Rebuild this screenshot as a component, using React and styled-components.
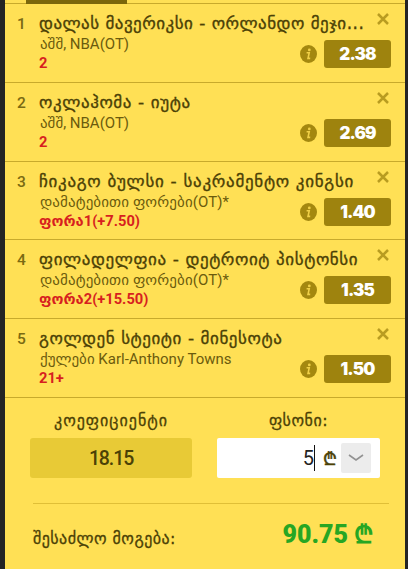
import React from "react";
import styled, { createGlobalStyle } from "styled-components";

const Global = createGlobalStyle`
  * { box-sizing: border-box; }
  body { margin: 0; background: #242424; }
`;
const Slip = styled.main`
  width: 400px;
  height: 569px;
  margin-left: 5px;
  overflow: hidden;
  background: #ffe055;
  color: #4b4106;
  font-family: Roboto, "DejaVu Sans", sans-serif;
`;
const TabBar = styled.div`
  height: 4px;
  padding-left: 21px;
  border-bottom: 1px solid #c8aa2c;
`;
const ActiveTab = styled.div`
  width: 101px;
  height: 4px;
  background: #7b670b;
`;
const BetRow = styled.article`
  display: grid;
  grid-template-columns: 34px 1fr 91px;
  height: ${(p) => p.$height}px;
  padding: 0 14px 0 0;
  border-bottom: 1px solid #c8aa2c;
`;
const Index = styled.div`
  padding: 10px 0 0 12px;
  font: 500 15.5px/20px Roboto, sans-serif;
  color: #7a6a12;
`;
const Details = styled.div`
  min-width: 0;
  padding-top: 8px;
  white-space: nowrap;
`;
const Title = styled.div`
  height: 22px;
  font: 400 17px/22px "DejaVu Sans", sans-serif;
  letter-spacing: ${(p) => p.$spacing}px;
  -webkit-text-stroke: 0.35px currentColor;
`;
const Market = styled.div`
  height: 20px;
  padding: 1px 0 0 1px;
  font: 400 15px/19px Roboto, "DejaVu Sans", sans-serif;
  letter-spacing: ${(p) => p.$spacing}px;
  color: #6b5b0d;
`;
const Pick = styled.div`
  height: 18px;
  font: 700 14.7px/18px Roboto, "DejaVu Sans", sans-serif;
  color: #d71f1f;
`;
const Side = styled.div`
  display: flex;
  flex-direction: column;
  align-items: flex-end;
  padding-top: 9px;
`;
const CloseIcon = styled.svg`
  width: 12px;
  height: 12px;
  margin-right: 2px;
  flex: none;
  stroke: #b99c21;
  stroke-width: 2.5;
`;
const OddsLine = styled.div`
  display: flex;
  align-items: center;
  gap: 7px;
  margin-top: 15px;
`;
const InfoIcon = styled.svg`
  width: 17px;
  height: 18px;
  flex: none;
`;
const Odds = styled.div`
  width: 67px;
  height: 28px;
  border-radius: 3px;
  background: #9e830e;
  color: #fff;
  text-align: center;
  font: 900 17px/28px Inter, sans-serif;
  letter-spacing: -0.9px;
`;
const Fields = styled.section`
  display: grid;
  grid-template-columns: 162px 163px;
  gap: 0 25px;
  padding: 12px 25px 0;
`;
const Label = styled.div`
  height: 28px;
  text-align: center;
  font: 400 16px/22px "DejaVu Sans", sans-serif;
  letter-spacing: ${(p) => p.$spacing}px;
  white-space: nowrap;
  -webkit-text-stroke: 0.3px currentColor;
`;
const Coefficient = styled.div`
  height: 40px;
  border-radius: 3px;
  background: #e8ca36;
  text-align: center;
  font: 500 19.5px/41px Roboto, sans-serif;
  letter-spacing: -1.1px;
`;
const Stake = styled.div`
  display: flex;
  align-items: center;
  justify-content: flex-end;
  height: 40px;
  padding-right: 9px;
  border-radius: 2px;
  background: #fff;
`;
const Amount = styled.span`
  height: 26px;
  border-right: 1px solid #111;
  color: #222;
  font: 400 20px/26px Roboto, sans-serif;
`;
const Currency = styled.span`
  width: 13px;
  margin: 2px 5px 0 8px;
  font: 400 18px/20px "DejaVu Sans", sans-serif;
  -webkit-text-stroke: 0.5px currentColor;
`;
const Dropdown = styled.button`
  display: grid;
  place-items: center;
  width: 30px;
  height: 30px;
  padding: 0;
  border: 0;
  border-radius: 2px;
  background: #ececec;
`;
const Winnings = styled.section`
  display: flex;
  justify-content: space-between;
  height: 66px;
  margin: 25px 16px 0 28px;
  padding: 16px 18px 0 0;
  border-top: 1px solid #e0bf37;
`;
const WinLabel = styled.div`
  padding-top: 8px;
  font: 400 16px/22px "DejaVu Sans", sans-serif;
  letter-spacing: 0.45px;
  -webkit-text-stroke: 0.3px currentColor;
`;
const WinAmount = styled.div`
  display: flex;
  gap: 6px;
  color: #27a623;
  font: 900 25px/30px Roboto, sans-serif;
`;
const WinCurrency = styled.span`
  width: 17px;
  font: 700 25px/30px "DejaVu Sans Condensed", "DejaVu Sans", sans-serif;
`;

const bets = [
  { title: "დალას მავერიკსი - ორლანდო მეჯი...", market: "აშშ, NBA(OT)", pick: "2", odds: "2.38", height: 79, spacing: 0.48 },
  { title: "ოკლაჰომა - იუტა", market: "აშშ, NBA(OT)", pick: "2", odds: "2.69", height: 79, spacing: 0.6 },
  { title: "ჩიკაგო ბულსი - საკრამენტო კინგსი", market: "დამატებითი ფორები(OT)*", pick: "ფორა1(+7.50)", odds: "1.40", height: 78, spacing: 0.7, marketSpacing: 0.1 },
  { title: "ფილადელფია - დეტროიტ პისტონსი", market: "დამატებითი ფორები(OT)*", pick: "ფორა2(+15.50)", odds: "1.35", height: 79, spacing: 0.6, marketSpacing: 0.1 },
  { title: "გოლდენ სტეიტი - მინესოტა", market: "ქულები Karl-Anthony Towns", pick: "21+", odds: "1.50", height: 79, spacing: 0.57 },
];

function Bet({ bet, index }) {
  return (
    <BetRow $height={bet.height}>
      <Index>{index}</Index>
      <Details>
        <Title $spacing={bet.spacing}>{bet.title}</Title>
        <Market $spacing={bet.marketSpacing || 0}>{bet.market}</Market>
        <Pick>{bet.pick}</Pick>
      </Details>
      <Side>
        <CloseIcon viewBox="0 0 12 12"><path d="M1 1l10 10M11 1L1 11" /></CloseIcon>
        <OddsLine>
          <InfoIcon viewBox="0 0 17 18">
            <ellipse cx="8.5" cy="9" rx="8.5" ry="9" fill="#a4880f" />
            <circle cx="9.3" cy="4.9" r="1.4" fill="#f0d048" />
            <path d="M6.6 7.8h2.6L8 13.4h2.2" fill="none" stroke="#f0d048" strokeWidth="1.6" />
          </InfoIcon>
          <Odds>{bet.odds}</Odds>
        </OddsLine>
      </Side>
    </BetRow>
  );
}

export default function App() {
  return (
    <>
      <Global />
      <Slip>
        <TabBar><ActiveTab /></TabBar>
        {bets.map((bet, i) => <Bet key={bet.title} bet={bet} index={i + 1} />)}
        <Fields>
          <Label $spacing={1}>კოეფიციენტი</Label>
          <Label $spacing={0.5}>ფსონი:</Label>
          <Coefficient>18.15</Coefficient>
          <Stake>
            <Amount>5</Amount>
            <Currency>₾</Currency>
            <Dropdown>
              <svg width="16" height="8" viewBox="0 0 16 8" fill="none" stroke="#929292" strokeWidth="1.6"><path d="M1 1l7 5 7-5" /></svg>
            </Dropdown>
          </Stake>
        </Fields>
        <Winnings>
          <WinLabel>შესაძლო მოგება:</WinLabel>
          <WinAmount>90.75<WinCurrency>₾</WinCurrency></WinAmount>
        </Winnings>
      </Slip>
    </>
  );
}
